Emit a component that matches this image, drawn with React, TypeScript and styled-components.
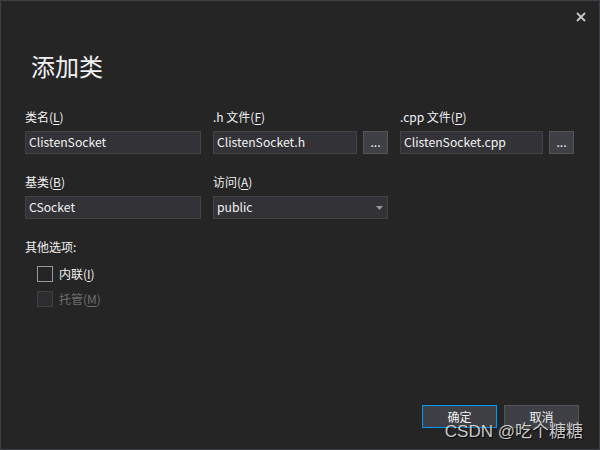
import React from "react";
import styled, { createGlobalStyle } from "styled-components";

const Global = createGlobalStyle`
  html, body { margin: 0; padding: 0; background: #252526; }
  body { font-family: "Noto Sans CJK SC", "Noto Sans", sans-serif; }
`;

const Dialog = styled.div`
  position: relative;
  box-sizing: border-box;
  width: 600px;
  height: 450px;
  background: #252526;
  border: 1px solid #3f3f46;
  color: #f1f1f1;
  display: flex;
  flex-direction: column;
  padding: 0 0 0 24px;
  font-size: 12px;
`;

const CloseBtn = styled.div`
  position: absolute;
  top: 8px;
  right: 10px;
  width: 16px;
  height: 16px;
  display: flex;
  align-items: center;
  justify-content: center;
`;

const Title = styled.h1`
  margin: 47px 0 0 6px;
  font-size: 24px;
  font-weight: 400;
  line-height: 36px;
  color: #f1f1f1;
`;

const Form = styled.div`
  display: grid;
  grid-template-columns: 176px 175px 174px;
  column-gap: 12px;
  row-gap: 20px;
  margin-top: 25px;
`;

const Field = styled.div`
  display: flex;
  flex-direction: column;
  gap: 6px;
`;

const Label = styled.label<{ $disabled?: boolean }>`
  font-size: 12px;
  line-height: 16px;
  height: 16px;
  color: ${(p) => (p.$disabled ? "#6d6d6d" : "#f1f1f1")};
  white-space: nowrap;
  u { text-underline-offset: 2px; }
`;

const InputRow = styled.div`
  display: flex;
  gap: 6px;
`;

const Input = styled.div`
  box-sizing: border-box;
  flex: 1;
  height: 23px;
  background: #333337;
  border: 1px solid #434346;
  padding: 0 3px;
  font-size: 12.2px;
  line-height: 21px;
  color: #f1f1f1;
  white-space: nowrap;
  overflow: hidden;
`;

const Select = styled(Input)`
  display: flex;
  justify-content: space-between;
  align-items: center;
  padding-right: 4px;
`;

const Browse = styled.div`
  box-sizing: border-box;
  width: 25px;
  height: 23px;
  background: #3f3f46;
  border: 1px solid #555558;
  display: flex;
  align-items: center;
  justify-content: center;
  font-size: 12px;
  line-height: 12px;
  padding-bottom: 2px;
  color: #f1f1f1;
`;

const Options = styled.div`
  display: flex;
  flex-direction: column;
  margin-top: 20px;
  gap: 9px;
`;

const CheckList = styled.div`
  display: flex;
  flex-direction: column;
  gap: 9px;
  padding-left: 12px;
  margin-top: 2px;
`;

const CheckRow = styled.div`
  display: flex;
  align-items: center;
  gap: 6px;
`;

const Box = styled.span<{ $disabled?: boolean }>`
  box-sizing: border-box;
  width: 16px;
  height: 16px;
  border: 1px solid ${(p) => (p.$disabled ? "#3f3f46" : "#999999")};
  background: ${(p) => (p.$disabled ? "#2d2d30" : "transparent")};
`;

const Footer = styled.div`
  margin-top: auto;
  margin-bottom: 21px;
  padding-right: 20px;
  display: flex;
  justify-content: flex-end;
  gap: 7px;
`;

const Button = styled.div<{ $primary?: boolean }>`
  box-sizing: border-box;
  width: 75px;
  height: 23px;
  background: #3f3f46;
  border: 1px solid ${(p) => (p.$primary ? "#0097fb" : "#555558")};
  display: flex;
  align-items: center;
  justify-content: center;
  font-size: 12px;
  color: #f1f1f1;
`;

const Watermark = styled.div`
  position: absolute;
  right: 16px;
  bottom: 7px;
  font-family: "Liberation Sans", "Noto Sans CJK SC", sans-serif;
  font-size: 17px;
  color: rgba(235, 235, 235, 0.85);
  text-shadow: 1px 1px 1px rgba(0, 0, 0, 0.8);
  pointer-events: none;
`;

export default function App() {
  return (
    <>
      <Global />
      <Dialog>
        <CloseBtn>
          <svg width="10" height="10" viewBox="0 0 10 10">
            <path d="M1 1 L9 9 M9 1 L1 9" stroke="#c8c8c8" strokeWidth="1.8" />
          </svg>
        </CloseBtn>
        <Title>添加类</Title>
        <Form>
          <Field>
            <Label>类名(<u>L</u>)</Label>
            <InputRow><Input>ClistenSocket</Input></InputRow>
          </Field>
          <Field>
            <Label>.h 文件(<u>F</u>)</Label>
            <InputRow>
              <Input>ClistenSocket.h</Input>
              <Browse>...</Browse>
            </InputRow>
          </Field>
          <Field>
            <Label>.cpp 文件(<u>P</u>)</Label>
            <InputRow>
              <Input>ClistenSocket.cpp</Input>
              <Browse>...</Browse>
            </InputRow>
          </Field>
          <Field>
            <Label>基类(<u>B</u>)</Label>
            <InputRow><Input>CSocket</Input></InputRow>
          </Field>
          <Field>
            <Label>访问(<u>A</u>)</Label>
            <InputRow>
              <Select>
                <span>public</span>
                <svg width="7" height="4" viewBox="0 0 7 4">
                  <path d="M0 0 H7 L3.5 4 Z" fill="#999999" />
                </svg>
              </Select>
            </InputRow>
          </Field>
        </Form>
        <Options>
          <Label>其他选项:</Label>
          <CheckList>
            <CheckRow>
              <Box />
              <Label>内联(<u>I</u>)</Label>
            </CheckRow>
            <CheckRow>
              <Box $disabled />
              <Label $disabled>托管(<u>M</u>)</Label>
            </CheckRow>
          </CheckList>
        </Options>
        <Footer>
          <Button $primary>确定</Button>
          <Button>取消</Button>
        </Footer>
        <Watermark>CSDN @吃个糖糖</Watermark>
      </Dialog>
    </>
  );
}
